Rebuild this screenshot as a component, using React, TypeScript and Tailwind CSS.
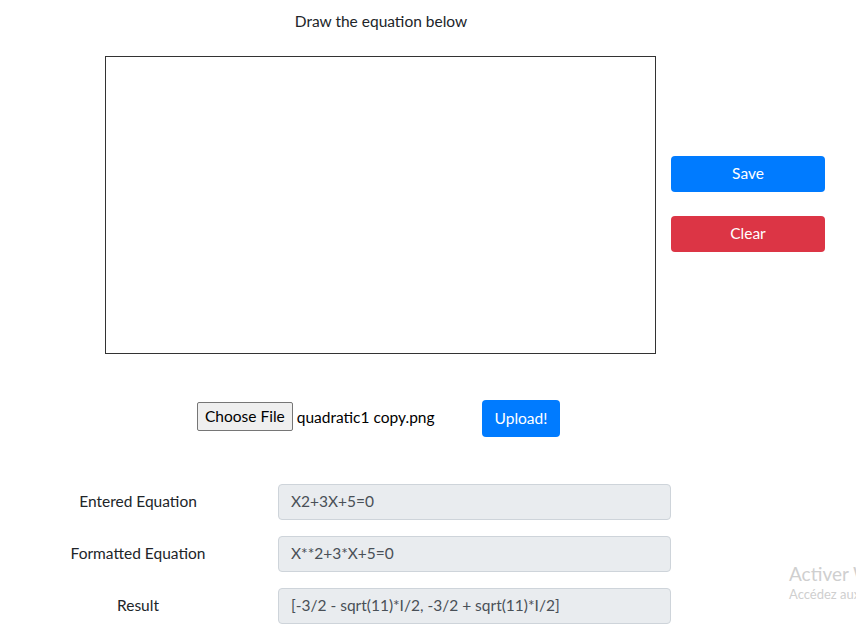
import React from "react";

const font = { fontFamily: "Lato, 'Open Sans', sans-serif" };

const Field = ({ label, value }: { label: string; value: string }) => (
    <div className="flex items-center">
        <div className="w-[196px] text-center text-[15.5px] text-[#212529]">{label}</div>
        <div className="ml-[42px] w-[393px] h-[36px] flex items-center px-3 bg-[#e9ecef] border border-[#ced4da] rounded text-[15.5px] text-[#495057]">
            {value}
        </div>
    </div>
);

const App = () => {
    return (
        <section className="relative w-[856px] h-[626px] overflow-hidden bg-white" style={font}>

            {/* title */}
            <div className="pt-[9px] w-[762px] text-center text-[15.5px] leading-6 text-[#212529]">Draw the equation below</div>

            {/* canvas and buttons */}
            <div className="flex items-center mt-[23px] ml-[105px]">
                <div className="w-[551px] h-[298px] border border-[#333] bg-white"></div>
                <div className="flex flex-col gap-6 ml-[15px] -mt-[2px]">
                    <button className="w-[154px] h-[36px] rounded bg-[#007bff] text-white text-[15.5px]">Save</button>
                    <button className="w-[154px] h-[36px] rounded bg-[#dc3545] text-white text-[15.5px]">Clear</button>
                </div>
            </div>

            {/* file upload */}
            <div className="flex items-start mt-[46px] ml-[197px]">
                <button className="mt-[2px] h-[29px] px-[7px] bg-[#efefef] border border-[#767676] rounded-[2px] text-[15.5px] text-black">Choose File</button>
                <span className="ml-[4px] mt-[6px] text-[15.5px] text-black">quadratic1 copy.png</span>
                <button className="ml-[47px] h-[37px] px-[13px] rounded bg-[#007bff] text-white text-[15.5px]">Upload!</button>
            </div>

            {/* results */}
            <div className="flex flex-col gap-4 mt-[47px] ml-[40px]">
                <Field label="Entered Equation" value="X2+3X+5=0" />
                <Field label="Formatted Equation" value="X**2+3*X+5=0" />
                <Field label="Result" value="[-3/2 - sqrt(11)*I/2, -3/2 + sqrt(11)*I/2]" />
            </div>

            {/* windows watermark */}
            <div className="absolute left-[789px] top-[562px] text-[#cfcfcf] whitespace-nowrap">
                <div className="text-[19px] leading-6">Activer Windows</div>
                <div className="text-[13px] leading-4">Accédez aux paramètres</div>
            </div>
        </section>
    );
}

export default App;
